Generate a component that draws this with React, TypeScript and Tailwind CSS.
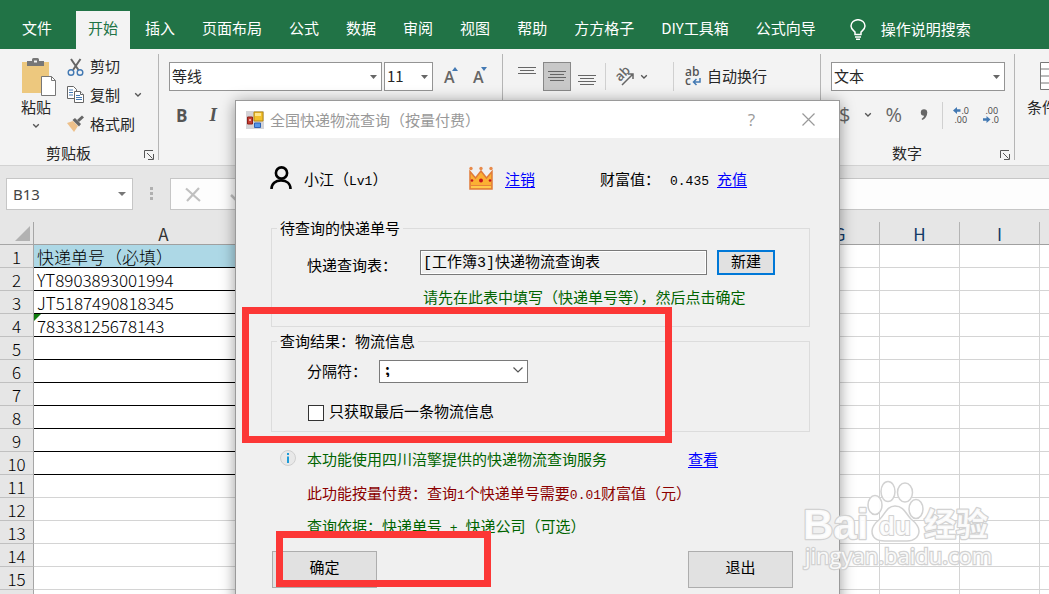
import type { ReactNode } from "react";

const TABS = ["开始", "插入", "页面布局", "公式", "数据", "审阅", "视图", "帮助", "方方格子", "DIY工具箱", "公式向导"];
const COLUMNS = ["A", "B", "C", "D", "E", "F", "G", "H", "I", "J"];
const CELLS = ["快递单号（必填）", "YT8903893001994", "JT5187490818345", "78338125678143"];
const ROWS = Array.from({ length: 16 }, (_, i) => i + 1);

function Chevron() {
  return (
    <svg width="8" height="6" viewBox="0 0 8 6" fill="none" stroke="#555" strokeWidth="1.3" aria-hidden="true">
      <path d="M1.2 1.2 4 4l2.8-2.8" />
    </svg>
  );
}

function Combo({ label, value, className }: { label: string; value: string; className: string }) {
  return (
    <div className={`relative h-[29px] ${className}`}>
      <select
        aria-label={label}
        className="h-full w-full appearance-none border border-[#949494] bg-white pl-[2px] text-[15px] text-[#262626]"
      >
        <option>{value}</option>
      </select>
      <svg className="pointer-events-none absolute top-[13px] right-[5px]" width="7" height="4" aria-hidden="true">
        <path d="M0 0h7L3.500 4z" fill="#666" />
      </svg>
    </div>
  );
}

function Launcher() {
  return (
    <button aria-label="更多设置" className="absolute right-[5px] bottom-[5px] h-[10px] w-[10px]">
      <svg width="10" height="10" viewBox="0 0 10 10" fill="none" stroke="#555" aria-hidden="true">
        <path d="M.5 8V.5H9M3 3l5.500 5.500M9.500 4v5.500H4" />
      </svg>
    </button>
  );
}

function Group({ label, launcher, className, children }: { label: string; launcher?: boolean; className: string; children: ReactNode }) {
  return (
    <section className={`relative flex shrink-0 flex-col pt-1 pb-px ${className}`}>
      <div className="flex-1">{children}</div>
      <div className="h-[22px] text-center leading-[22px]">{label}</div>
      {launcher && <Launcher />}
      <span className="absolute top-[5px] right-0 bottom-[5px] w-px bg-[#b5b5b5]" />
    </section>
  );
}

function AlignIcon({ y }: { y: number[] }) {
  return (
    <svg width="18" height="29" viewBox="0 0 18 29" stroke="#666" aria-hidden="true">
      {y.map((v, i) => (
        <path key={v} d={i % 2 ? `M2 ${v}.500H16` : `M0 ${v}.500H18`} />
      ))}
    </svg>
  );
}

function Ribbon() {
  return (
    <div className="flex h-[117px] overflow-hidden border-b border-[#d2d2d2] bg-[#f3f3f3] text-[15px] text-[#262626]">
      <Group label="剪贴板" launcher className="w-[159px] [&>div:nth-child(2)]:pr-[22px]">
        <div className="flex">
          <button className="ml-5 flex w-[38px] flex-col pt-[5px] leading-5">
            <svg className="ml-[2px]" width="34" height="38" viewBox="0 0 34 38" aria-hidden="true">
              <path d="M0 4h27v31H0z" fill="#edc87e" />
              <path d="M5 3h5V1.500Q10 0 11.500 0h4Q17 0 17 1.500V3h5v5H5z" fill="#777" />
              <path d="M12 2.500h3v2h-3z" fill="#f3f3f3" />
              <path d="M19.500 18.500h10l4 4v15h-14z" fill="#fff" stroke="#777" />
              <path d="M29.500 18.500v4h4" fill="none" stroke="#777" />
            </svg>
            <span className="mt-px flex w-8 flex-col items-center gap-[6px]">
              粘贴
              <Chevron />
            </span>
          </button>
          <div className="ml-2 flex flex-col">
            <button className="flex h-7 items-center gap-1 pb-px">
              <svg width="20" height="20" viewBox="0 0 20 20" fill="none" aria-hidden="true">
                <path d="M5 2 12.500 13M14.500 2 7 13" stroke="#666" strokeWidth="2" />
                <circle cx="5" cy="15.500" r="2.800" stroke="#4379b3" strokeWidth="1.400" />
                <circle cx="14" cy="15.500" r="2.800" stroke="#4379b3" strokeWidth="1.400" />
              </svg>
              剪切
            </button>
            <div className="flex h-[29px] items-center pb-px">
              <button className="flex items-center gap-1">
                <svg width="20" height="20" viewBox="0 0 20 20" fill="#fff" stroke="#666" aria-hidden="true">
                  <path d="M1.500 1.500h6l3 3v9h-9z" />
                  <path d="M3 5h4M3 7.500h4M3 10h4" stroke="#4379b3" />
                  <path d="M8.500 6.500h6l3 3v8h-9z" />
                  <path d="M14.500 6.500v3h3" />
                  <path d="M10 10.500h4M10 12.500h6M10 14.500h6" stroke="#4379b3" />
                </svg>
                复制
              </button>
              <button aria-label="复制选项" className="ml-[14px]"><Chevron /></button>
            </div>
            <button className="flex h-[29px] items-center gap-1 pb-px">
              <svg width="20" height="20" viewBox="0 0 20 20" aria-hidden="true">
                <path d="m1 9 6-2 5 5-4 6z" fill="#edc08a" />
                <path d="m6.500 6 2.500-2 6 6-2 2.500z" fill="#666" />
                <path d="m11 6 5-4.500 2 2L13 8z" fill="#666" />
              </svg>
              格式刷
            </button>
          </div>
        </div>
      </Group>
      <Group label="字体" className="w-[344px]">
        <div className="flex pt-[9px] pl-[10px]">
          <Combo label="字体" value="等线" className="w-[213px]" />
          <Combo label="字号" value="11" className="ml-[2px] w-[49px]" />
          <button aria-label="增大字号" className="ml-[11px] flex w-[17px] items-center font-['Open_Sans'] text-[16px] font-semibold text-[#666]">
            A<svg className="mb-4 -ml-[3px] shrink-0" width="7" height="4" aria-hidden="true"><path d="M0 4h6L3 0z" fill="#4379b3" /></svg>
          </button>
          <button aria-label="减小字号" className="ml-3 flex w-[17px] items-center font-['Open_Sans'] text-[16px] font-semibold text-[#666]">
            A<svg className="mb-4 -ml-[3px] shrink-0" width="7" height="4" aria-hidden="true"><path d="M0 0h6L3 4z" fill="#4379b3" /></svg>
          </button>
        </div>
        <div className="flex items-center gap-[22px] pt-[10px] pl-[17px] font-['Open_Sans'] text-[17px] text-[#555]">
          <button className="font-bold">B</button>
          <button className="font-['Liberation_Serif'] text-[19px] font-bold italic">I</button>
        </div>
      </Group>
      <Group label="对齐方式" className="w-[318px]">
        <div className="flex items-center pt-[9px] pl-[15px]">
          <button aria-label="顶端对齐"><AlignIcon y={[5, 8, 11]} /></button>
          <button aria-label="垂直居中" className="ml-[7px] flex h-[29px] w-[28px] items-center justify-center border border-[#888] bg-[#c8c8c8]">
            <AlignIcon y={[9, 12, 15, 18]} />
          </button>
          <button aria-label="底端对齐" className="ml-[7px]"><AlignIcon y={[13, 16, 19, 22]} /></button>
          <span className="ml-[9px] h-[27px] w-px bg-[#d0d0d0]" />
          <button aria-label="方向" className="ml-2 flex items-center gap-[6px]">
            <svg className="overflow-visible" width="20" height="20" viewBox="0 0 20 20" aria-hidden="true">
              <text x="0" y="0" transform="translate(6 15) rotate(-45)" fontFamily="Open Sans" fontSize="13" fontWeight="600" fill="#666">ab</text>
              <path d="M8 18 18.500 7.500M14 7H19V12" fill="none" stroke="#666" strokeWidth="1.500" />
            </svg>
            <Chevron />
          </button>
          <span className="ml-[25px] h-[29px] w-px bg-[#d0d0d0]" />
          <button className="ml-[11px] flex items-center gap-[5px]">
            <svg className="overflow-visible" width="17" height="20" viewBox="0 0 17 20" aria-hidden="true">
              <text x="0" y="9" fontFamily="Open Sans" fontSize="12" fontWeight="600" fill="#555">ab</text>
              <text x="0" y="18" fontFamily="Open Sans" fontSize="12" fontWeight="600" fill="#555">c</text>
              <path d="M15 11v4H9M11.500 12 8.500 15l3 3" fill="none" stroke="#4379b3" strokeWidth="1.500" />
            </svg>
            自动换行
          </button>
        </div>
      </Group>
      <Group label="数字" launcher className="w-[194px] [&>div:nth-child(2)]:pr-[22px]">
        <div className="flex pt-[9px] pl-[10px]">
          <Combo label="数字格式" value="文本" className="w-[174px]" />
        </div>
        <div className="flex h-12 items-center pl-[18px] font-['Open_Sans'] text-[20px] text-[#666]">
          <button>$</button>
          <button aria-label="货币选项" className="ml-[14px]"><Chevron /></button>
          <button className="ml-[13px]">%</button>
          <button aria-label="千位分隔" className="ml-[18px]">
            <svg width="8" height="14" viewBox="0 0 8 14" aria-hidden="true"><circle cx="4" cy="4.500" r="3.200" fill="#666" /><path d="M7.200 4.500Q7 10 2.500 12L1.500 11Q4.500 9 4.500 6z" fill="#666" /></svg>
          </button>
          <span className="ml-[14px] h-[27px] w-px bg-[#d0d0d0]" />
          <button aria-label="增加小数位数" className="ml-[10px]">
            <svg className="overflow-visible" width="16" height="18" viewBox="0 0 16 18" fontFamily="Open Sans" fontSize="9" fill="#444" aria-hidden="true">
              <path d="M0 4.500 4 1v2.300h3.500v2.400H4V8z" fill="#4379b3" />
              <text x="8.500" y="8">.0</text><text x="1.500" y="17">.00</text>
            </svg>
          </button>
          <button aria-label="减少小数位数" className="ml-[14px]">
            <svg className="overflow-visible" width="16" height="18" viewBox="0 0 16 18" fontFamily="Open Sans" fontSize="9" fill="#444" aria-hidden="true">
              <path d="M7.500 13.500 3.500 10v2.300H0v2.400h3.500V17z" fill="#4379b3" />
              <text x="2.500" y="8">.00</text><text x="8.500" y="17">.0</text>
            </svg>
          </button>
        </div>
      </Group>
      <button className="ml-3 flex w-[60px] shrink-0 flex-col pt-[13px]">
        <svg className="ml-[13px]" width="34" height="28" viewBox="0 0 34 28" fill="#fff" stroke="#777" aria-hidden="true">
          <path d="M.5.5h33v27H.5zM.5 7h33M.5 14h33M.5 21h33" />
        </svg>
        <span className="mt-[6px] whitespace-nowrap">条件格式</span>
      </button>
    </div>
  );
}

function FormulaBar() {
  return (
    <div className="flex h-14 bg-[#e6e6e6] pt-3 pl-[6px]">
      <div className="relative h-8 w-[127px] shrink-0">
        <input
          aria-label="名称框"
          defaultValue="B13"
          className="h-full w-full border border-[#c6c6c6] bg-white pl-[6px] font-['Noto_Sans'] text-[15px] text-[#444]"
        />
        <svg className="pointer-events-none absolute top-[14px] right-[7px]" width="8" height="4" aria-hidden="true"><path d="M0 0h8L4 4z" fill="#777" /></svg>
      </div>
      <div className="ml-[17px] flex flex-col gap-[2px] pt-[9px]">
        <i className="h-[3px] w-[3px] bg-[#b0b0b0]" />
        <i className="h-[3px] w-[3px] bg-[#b0b0b0]" />
        <i className="h-[3px] w-[3px] bg-[#b0b0b0]" />
      </div>
      <div className="ml-[17px] flex h-8 flex-1 items-center border-y border-l border-[#c6c6c6] bg-[#fdfdfd] pl-[14px]">
        <button aria-label="取消">
          <svg width="17" height="15" viewBox="0 0 17 15" stroke="#c0c0c0" strokeWidth="2.200" aria-hidden="true"><path d="M1 1.500 15 14M14 1 2 14" /></svg>
        </button>
        <button aria-label="输入" className="ml-7">
          <svg width="17" height="15" viewBox="0 0 17 15" fill="none" stroke="#c0c0c0" strokeWidth="2.500" aria-hidden="true"><path d="m1 8 5 5L16 2" /></svg>
        </button>
        <input aria-label="编辑栏" className="h-full flex-1 bg-transparent" />
      </div>
    </div>
  );
}

function Sheet() {
  return (
    <table className="w-[1120px] table-fixed border-separate border-spacing-0 text-[17px] leading-5">
      <colgroup>
        <col className="w-[34px]" />
        <col className="w-[260px]" />
        <col className="w-[186px]" />
        {COLUMNS.slice(2).map((c) => <col key={c} className="w-20" />)}
      </colgroup>
      <thead>
        <tr className="h-[23px] bg-[#e6e6e6]">
          <th className="border-r border-b border-[#a6a6a6] p-0">
            <svg className="ml-[15px]" width="15" height="15" aria-hidden="true"><path d="M15 0v15H0z" fill="#b2b2b2" /></svg>
          </th>
          {COLUMNS.map((c, i) => (
            <th key={c} className={`border-r border-b border-r-[#b4b4b4] border-b-[#a0a0a0] p-0 pt-[2px] font-normal ${i > 5 ? "text-[#123a66]" : "text-[#333]"}`}>{c}</th>
          ))}
        </tr>
      </thead>
      <tbody>
        {ROWS.map((r) => (
          <tr key={r} className="h-[23px] bg-white">
            <th className="border-r border-b border-r-[#a6a6a6] border-b-[#c0c0c0] bg-[#e6e6e6] p-0 pt-px font-light text-black">{r}</th>
            {COLUMNS.map((c, i) => {
              if (i > 0) return <td key={c} className="border-r border-b border-[#d4d4d4] p-0" />;
              return (
                <td
                  key={c}
                  className={`relative border-r border-b border-r-[#d4d4d4] p-0 pt-px pl-[3px] font-light text-black ${r <= 10 ? "border-b-black" : "border-b-[#d4d4d4]"} ${r === 1 ? "bg-[#add8e6]" : ""}`}
                >
                  {CELLS[r - 1]}
                  {r === 4 && <svg className="absolute top-0 left-0" width="7" height="7" aria-hidden="true"><path d="M0 0h7L0 7z" fill="#107c10" /></svg>}
                </td>
              );
            })}
          </tr>
        ))}
      </tbody>
    </table>
  );
}

function Half({ children }: { children: ReactNode }) {
  return <span className="font-['Liberation_Mono'] text-[13px] leading-none">{children}</span>;
}

const link = "text-[#0000ff] underline underline-offset-2";
const bigButton = "h-[37px] w-[105px] border border-[#adadad] bg-[#e1e1e1] pb-[6px]";

function Dialog() {
  return (
    <div
      role="dialog"
      aria-label="全国快递物流查询（按量付费）"
      className="absolute top-[100px] left-[235px] h-[520px] w-[605px] border border-[#9a9a9a] bg-[#f0f0f0] text-[15px] leading-5 text-black shadow-[0_2px_14px_rgba(0,0,0,0.4)]"
    >
      <div className="flex h-[37px] items-center bg-white pl-[10px] text-[#999]">
        <svg width="18" height="18" viewBox="0 0 18 18" aria-hidden="true">
          <path d="M0 0h18v18H0z" fill="#d4d4d8" />
          <path d="M8 1h9v9H8z" fill="#f2c02c" stroke="#b98a10" />
          <path d="M9 2h6v3H9z" fill="#ffe58a" />
          <path d="M1.500 6h5v7h-5z" fill="#c43c31" stroke="#8e2019" />
          <path d="M3 8h2v2H3z" fill="#f0a8a0" />
          <path d="M8.500 12h6v4.500h-6z" fill="#5596ea" stroke="#2c62b4" />
        </svg>
        <h1 className="ml-[6px]">全国快递物流查询（按量付费）</h1>
        <button aria-label="帮助" className="ml-auto font-['Open_Sans'] text-[17px]">?</button>
        <button aria-label="关闭" className="mr-6 ml-[47px]">
          <svg width="13" height="13" viewBox="0 0 13 13" stroke="#999" strokeWidth="1.200" aria-hidden="true"><path d="m.5.5 12 12M12.500.5l-12 12" /></svg>
        </button>
      </div>

      <div className="flex items-center pt-7 pl-[34px]">
        <svg width="22" height="24" viewBox="0 0 22 24" fill="none" stroke="#000" strokeWidth="2.600" aria-hidden="true">
          <circle cx="11.500" cy="7" r="5.600" />
          <path d="M1.500 23c0-5.500 4-8.500 9.500-8.500s9.500 3 9.500 8.500" />
        </svg>
        <span className="mt-[2px] ml-3 w-[165px]">小江（<Half>Lv1</Half>）</span>
        <svg width="24" height="24" viewBox="0 0 24 24" aria-hidden="true">
          <path d="M1 5.500 6.500 12 12 5l5.500 7L23 5.500V23H1z" fill="#fbb033" stroke="#e07b39" strokeWidth="1.500" />
          <path d="M1.500 19.500h21" stroke="#e8823a" />
          <path d="M2 21h20" stroke="#ffc94a" strokeWidth="2" />
          <circle cx="12" cy="14.500" r="2" fill="#c8141c" />
          <circle cx="3" cy="14.500" r="1.300" fill="#c8141c" />
          <circle cx="21" cy="14.500" r="1.300" fill="#c8141c" />
          <circle cx="2" cy="2.500" r="1.700" fill="#e88a4a" />
          <circle cx="12" cy="2.500" r="1.700" fill="#e88a4a" />
          <circle cx="22" cy="2.500" r="1.700" fill="#e88a4a" />
        </svg>
        <p className="mt-[2px] ml-3 flex items-baseline">
          <a href="#logout" className={link}>注销</a>
          <span className="ml-[65px] w-[70px]">财富值：</span>
          <Half>0.435</Half>
          <a href="#topup" className={`ml-2 ${link}`}>充值</a>
        </p>
      </div>

      <fieldset className="mt-7 ml-[35px] h-[109px] w-[539px] border border-[#dcdcdc]">
        <legend className="ml-[5px] px-[3px]">待查询的快递单号</legend>
        <div className="flex items-center pt-3 pl-[35px]">
          <label htmlFor="sheet" className="w-[113px] pt-1">快递查询表：</label>
          <input
            id="sheet"
            readOnly
            value="[工作簿3]快递物流查询表"
            className="h-[25px] w-[287px] border border-[#7a7a7a] bg-[#f0f0f0] pb-1 pl-[2px] font-['Liberation_Mono','Noto_Sans_CJK_SC',monospace] shadow-[inset_0_0_0_1px_white]"
          />
          <button className="ml-[10px] h-[25px] w-[58px] border-2 border-[#0078d7] bg-[#e1e1e1] pb-1 leading-4">新建</button>
        </div>
        <p className="mt-3 pl-[151px] text-[#006400]">请先在此表中填写（快递单号等），然后点击确定</p>
      </fieldset>

      <fieldset className="mt-1 ml-[35px] h-[101px] w-[539px] border border-[#dcdcdc]">
        <legend className="ml-[5px] px-[3px]">查询结果：物流信息</legend>
        <div className="flex items-center pt-2 pl-[35px]">
          <label htmlFor="separator" className="w-[72px]">分隔符：</label>
          <div className="relative">
            <select id="separator" className="h-[23px] w-[149px] appearance-none border border-[#7a7a7a] bg-white pb-1 pl-[5px] leading-4 font-bold">
              <option>;</option>
            </select>
            <svg className="pointer-events-none absolute top-2 right-[5px]" width="10" height="6" viewBox="0 0 10 6" fill="none" stroke="#555" strokeWidth="1.200" aria-hidden="true"><path d="m.5.5 4.500 4.500L9.500.5" /></svg>
          </div>
        </div>
        <label className="mt-[18px] flex items-center gap-[5px] pl-9">
          <input type="checkbox" className="mt-1 h-4 w-4 appearance-none border border-[#333] bg-white" />
          只获取最后一条物流信息
        </label>
      </fieldset>

      <div className="relative pt-[17px] pl-[71px]">
        <svg className="absolute top-[18px] left-11" width="16" height="16" viewBox="0 0 16 16" aria-hidden="true">
          <circle cx="8" cy="8" r="7.500" fill="#e8e8e8" stroke="#cfcfcf" />
          <path d="M7 3h2v2H7zM7 6.500h2V13H7z" fill="#1e9bd7" />
        </svg>
        <p className="flex h-5 w-[411px] justify-between text-[#006400]">
          本功能使用四川涪擎提供的快递物流查询服务
          <a href="#view" className={link}>查看</a>
        </p>
        <p className="mt-[14px] h-5 text-[#8b0000]">此功能按量付费：查询<Half>1</Half>个快递单号需要<Half>0.01</Half>财富值（元）</p>
        <p className="mt-[13px] h-5 text-[#006400]">查询依据：快递单号<Half> + </Half>快递公司（可选）</p>
      </div>

      <div className="flex w-[557px] justify-between pt-[15px] pl-9">
        <button className={bigButton}>确定</button>
        <button className={bigButton}>退出</button>
      </div>
    </div>
  );
}

function Watermark() {
  return (
    <svg className="pointer-events-none absolute top-[478px] left-[800px]" width="200" height="100" viewBox="0 0 200 100" fill="#fff" fillOpacity="0.9" stroke="#d2d2d2" strokeWidth="1.500" aria-hidden="true">
      <ellipse cx="75" cy="27" rx="7" ry="9.500" />
      <ellipse cx="88" cy="13.500" rx="7" ry="10" />
      <ellipse cx="105" cy="14.500" rx="7.500" ry="9.500" />
      <ellipse cx="116" cy="31" rx="7" ry="9.500" />
      <path d="M95 28c-8 0-10 8-15 13-5 4-8 7-8 12 0 8 6 10 13 10h22c7 0 12-4 12-10 0-5-3-8-8-12-5-5-7-13-16-13z" />
      <g fontFamily="Liberation Sans" fontWeight="700" paintOrder="stroke" strokeWidth="2.500" strokeLinejoin="round">
        <text x="3" y="61" fontSize="42">Bai</text>
        <text x="79" y="57" fontSize="26" strokeWidth="2">du</text>
        <text x="124" y="58" fontSize="32" fontFamily="Noto Sans CJK SC">经验</text>
      </g>
      <text x="5" y="86" fontFamily="Open Sans" fontSize="22" paintOrder="stroke" strokeWidth="2.500">jingyan.baidu.com</text>
    </svg>
  );
}

export default function App() {
  return (
    <div className="relative h-screen overflow-hidden bg-white font-['Noto_Sans_CJK_SC',sans-serif]">
      <header className="flex h-[49px] items-end bg-[#217346] text-[15px] whitespace-nowrap text-white">
        <button className="h-[38px] pr-6 pb-1 pl-[22px]">文件</button>
        <nav className="flex gap-[3px]">
          {TABS.map((t, i) => (
            <button key={t} className={`h-[38px] px-3 pb-1 ${i === 0 ? "bg-[#f3f3f3] text-[#217346]" : ""}`}>{t}</button>
          ))}
        </nav>
        <button className="ml-[22px] flex h-[38px] items-center gap-[15px] pb-[2px]">
          <svg width="16" height="21" viewBox="0 0 16 21" fill="none" stroke="#fff" strokeWidth="1.500" aria-hidden="true">
            <path d="M5 15.500V13C3 11 1 10 1 7a7 6.300 0 0 1 14 0c0 3-2 4-4 6v2.500zM5 18h6M6 20.200h4" />
          </svg>
          操作说明搜索
        </button>
      </header>
      <Ribbon />
      <FormulaBar />
      <Sheet />
      <Dialog />
      <div className="pointer-events-none absolute top-[307px] left-[242px] h-[136px] w-[430px] border-[7px] border-[#fc3736]" />
      <div className="pointer-events-none absolute top-[531px] left-[276px] h-[56px] w-[215px] border-[7px] border-[#fc3736]" />
      <Watermark />
    </div>
  );
}
